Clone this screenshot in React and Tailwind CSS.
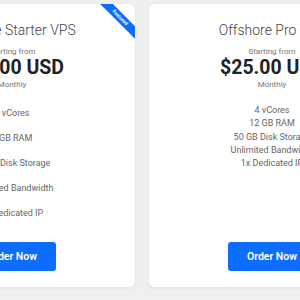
import React from 'react';

const plans = [
    {
        name: 'Offshore Starter VPS',
        price: '$10.00 USD',
        featured: true,
        features: ['2 vCores', '4 GB RAM', '25 GB Disk Storage', 'Unlimited Bandwidth', '1x Dedicated IP'],
    },
    {
        name: 'Offshore Pro VPS',
        price: '$25.00 USD',
        featured: false,
        features: ['4 vCores', '12 GB RAM', '50 GB Disk Storage', 'Unlimited Bandwidth', '1x Dedicated IP'],
    },
];

const PlanCard = ({ plan }) => {
    return (
        <div className="relative flex flex-col items-center w-[246px] h-[283px] shrink-0 bg-white rounded-md shadow-[0_1px_4px_rgba(0,0,0,0.06)] overflow-hidden">
            {plan.featured && (
                <div className="absolute top-[9px] right-[-16px] w-[62px] h-[9px] rotate-45 bg-[#0d6efd] flex items-center justify-center">
                    <span className="text-[5px] leading-none font-bold text-white">Featured</span>
                </div>
            )}
            <h3 className="mt-[15px] text-[14px] leading-[22px] font-light text-[#444]">{plan.name}</h3>
            <p className="mt-[6px] text-[8px] leading-[10px] text-[#777]">Starting from</p>
            <p className="text-[19.5px] leading-[22px] font-bold text-[#222]">{plan.price}</p>
            <p className="mt-[1px] text-[8px] leading-[10px] text-[#777]">Monthly</p>
            {plan.featured ? (
                <ul className="mt-[17px] flex flex-col items-center gap-[13px]">
                    {plan.features.map((f) => (
                        <li key={f} className="text-[9px] leading-[12px] text-[#666]">{f}</li>
                    ))}
                </ul>
            ) : (
                <ul className="mt-[14px] flex flex-col items-center">
                    {plan.features.map((f) => (
                        <li key={f} className="text-[9px] leading-[13.3px] text-[#666]">{f}</li>
                    ))}
                </ul>
            )}
            <button className="mt-auto mb-[16px] w-[88px] h-[29px] rounded-[3px] bg-[#0d6efd] text-white text-[10.5px] font-semibold">
                Order Now
            </button>
        </div>
    );
};

export default function App() {
    return (
        <div className="w-[300px] h-[300px] overflow-hidden bg-[#efefef] font-['Roboto',sans-serif]">
            <div className="flex gap-[14px] ml-[-111px] pt-[4px]">
                {plans.map((p) => (
                    <PlanCard key={p.name} plan={p} />
                ))}
            </div>
        </div>
    );
}
